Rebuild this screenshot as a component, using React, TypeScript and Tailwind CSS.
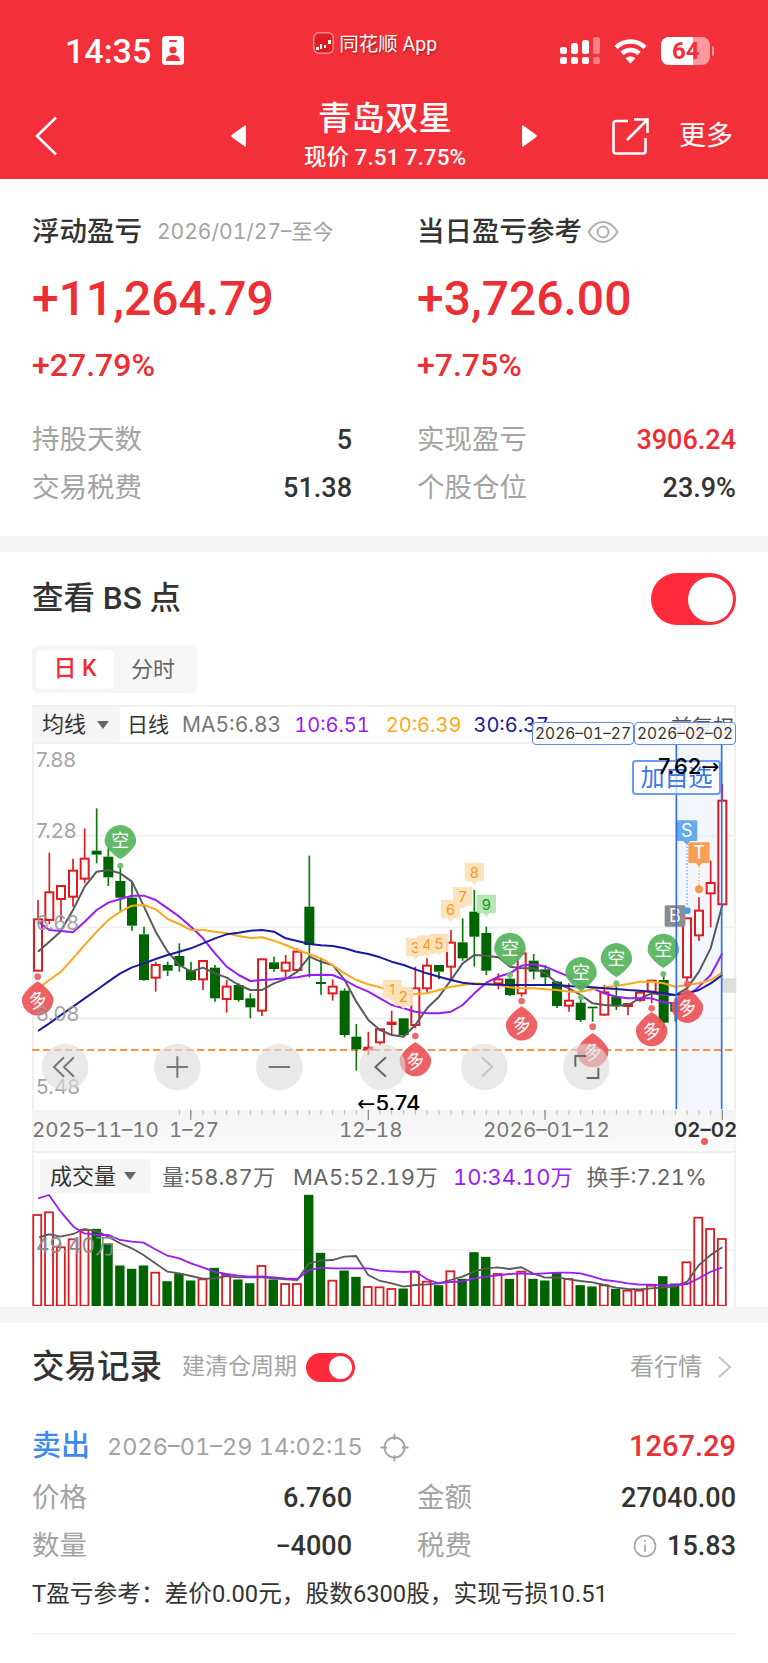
import React from "react";

const RED = "#dd1c22";
const GREEN = "#006400";

// x, high, top, bottom, low, up
type Candle = [number, number, number, number, number, number];
const candles: Candle[] = [
  [114, 600, 658, 812, 812, 1], [148, 458, 577, 660, 672, 1], [183, 558, 558, 597, 665, 1], [219, 476, 512, 590, 620, 1],
  [254, 385, 476, 536, 550, 1], [290, 325, 452, 464, 490, 0], [325, 445, 470, 532, 558, 0], [361, 490, 543, 593, 632, 0],
  [396, 545, 593, 677, 692, 0], [432, 680, 703, 840, 842, 0], [467, 785, 795, 833, 875, 1], [503, 785, 795, 812, 828, 0],
  [538, 730, 768, 798, 815, 0], [573, 785, 810, 840, 842, 0], [609, 782, 783, 838, 870, 1], [645, 795, 803, 895, 905, 0],
  [680, 840, 860, 897, 938, 1], [716, 850, 855, 900, 905, 0], [751, 880, 895, 922, 955, 0], [786, 777, 778, 932, 948, 1],
  [822, 770, 787, 807, 815, 0], [857, 765, 788, 812, 835, 1], [892, 745, 755, 810, 818, 1], [928, 467, 620, 735, 832, 0],
  [963, 775, 846, 852, 884, 0], [998, 838, 860, 880, 902, 1], [1034, 865, 872, 1005, 1012, 0], [1069, 972, 1010, 1048, 1112, 0],
  [1105, 995, 1043, 1048, 1065, 1], [1140, 985, 988, 1027, 1035, 1], [1175, 932, 968, 972, 1005, 1], [1211, 955, 955, 1005, 1010, 0],
  [1246, 800, 865, 975, 985, 1], [1281, 775, 797, 865, 878, 1], [1317, 795, 795, 815, 838, 0], [1353, 690, 728, 800, 840, 1],
  [1388, 655, 727, 775, 782, 0], [1423, 570, 635, 710, 800, 0], [1459, 680, 699, 812, 825, 0], [1495, 820, 838, 850, 868, 1],
  [1530, 835, 836, 885, 888, 0], [1565, 745, 760, 880, 890, 1], [1601, 762, 782, 815, 838, 0], [1636, 795, 808, 832, 852, 0],
  [1671, 843, 845, 918, 924, 0], [1707, 850, 902, 917, 935, 1], [1742, 885, 908, 960, 966, 0], [1778, 920, 920, 925, 965, 0],
  [1813, 855, 877, 944, 946, 1], [1849, 860, 890, 916, 930, 0], [1884, 910, 912, 918, 946, 1], [1920, 870, 878, 900, 905, 1],
  [1955, 840, 842, 875, 910, 1], [1991, 820, 840, 968, 988, 0], [2026, 895, 908, 935, 965, 0], [2061, 655, 655, 832, 850, 1],
  [2097, 592, 632, 706, 723, 1], [2132, 482, 549, 580, 682, 1], [2167, 252, 302, 613, 613, 1],
];

const ma5 = "114,755 180,697 219,630 254,560 290,515 325,510 361,520 396,545 432,620 467,695 503,755 538,795 573,815 609,803 645,820 680,833 716,855 751,870 786,870 822,850 857,837 892,815 928,770 963,785 998,795 1034,840 1069,905 1105,960 1140,990 1175,1005 1211,1010 1246,975 1281,925 1317,890 1353,840 1388,790 1423,765 1459,767 1495,772 1530,800 1565,805 1601,805 1636,820 1671,850 1707,865 1742,885 1778,910 1813,915 1849,917 1884,915 1920,895 1955,880 1991,885 2026,885 2061,865 2097,815 2132,745 2167,615";
const ma10 = "114,665 148,690 183,693 219,697 254,665 290,630 325,608 361,597 396,587 432,587 467,600 503,625 538,650 573,680 609,715 645,760 680,800 716,825 751,843 786,840 822,838 857,835 892,832 928,825 963,824 998,825 1034,840 1069,860 1105,875 1140,895 1175,915 1211,925 1246,935 1281,940 1317,940 1353,935 1388,915 1423,880 1459,848 1495,830 1530,820 1565,797 1601,793 1636,800 1671,815 1707,830 1742,850 1778,865 1813,880 1849,890 1884,895 1920,895 1955,895 1991,907 2026,910 2061,890 2097,860 2132,825 2167,760";
const ma20 = "114,865 148,840 183,815 219,775 254,735 290,695 325,660 361,635 396,617 432,615 467,628 503,657 538,672 573,690 609,690 645,695 680,700 716,708 751,714 786,712 822,722 857,735 892,750 928,762 963,775 998,795 1034,820 1069,840 1105,853 1140,862 1175,875 1211,880 1246,883 1281,880 1317,870 1353,860 1388,855 1423,850 1459,853 1495,855 1530,862 1565,865 1601,865 1636,868 1671,870 1707,875 1742,875 1778,868 1813,862 1849,858 1884,852 1920,845 1955,845 1991,850 2026,860 2061,855 2097,850 2132,840 2167,818";
const ma30 = "114,993 148,970 183,945 219,920 254,895 290,870 325,845 361,820 396,802 432,790 467,777 503,765 538,755 573,745 609,730 645,715 680,703 716,698 751,692 786,690 822,695 857,715 892,723 928,732 963,736 998,738 1034,745 1069,755 1105,762 1140,772 1175,785 1211,795 1246,808 1281,820 1317,830 1353,840 1388,848 1423,852 1459,853 1495,854 1530,855 1565,855 1601,855 1636,855 1671,855 1707,858 1742,860 1778,862 1813,865 1849,867 1884,870 1920,872 1955,875 1991,880 2026,885 2061,880 2097,870 2132,850 2167,825";

const volTops: [number, number][] = [
  [285, 1], [277, 1], [382, 1], [358, 1], [330, 1], [328, 0], [372, 0], [438, 0], [448, 0], [438, 0], [458, 1], [485, 0], [462, 0], [483, 0], [478, 1],
  [445, 0], [465, 1], [480, 0], [491, 0], [438, 1], [480, 0], [492, 1], [492, 1], [226, 0], [400, 0], [482, 1], [453, 0], [472, 0], [501, 1], [502, 1],
  [507, 1], [507, 0], [455, 1], [485, 1], [497, 0], [454, 1], [478, 0], [398, 0], [412, 0], [462, 1], [478, 0], [455, 1], [478, 0], [483, 0], [460, 0],
  [477, 1], [497, 0], [501, 0], [496, 1], [508, 0], [512, 1], [512, 1], [497, 1], [470, 0], [492, 0], [427, 1], [293, 1], [327, 1], [357, 1],
];
const volMa5 = "80,352 100,343 124,350 150,342 172,327 200,335 221,350 245,370 269,385 293,405 317,430 342,455 366,460 390,468 414,476 438,476 462,468 486,472 510,472 535,472 559,475 583,478 607,480 631,430 655,422 679,420 703,410 727,408 752,465 776,483 800,490 824,500 848,495 872,493 896,490 920,480 944,470 968,455 992,445 1016,442 1040,447 1064,442 1088,460 1113,473 1137,472 1161,478 1185,483 1210,487 1234,495 1258,503 1282,507 1306,508 1330,505 1355,502 1379,500 1403,485 1427,435 1451,405 1475,382";
const volMa10 = "78,235 100,225 124,275 150,320 172,340 200,345 221,345 245,360 269,365 293,368 317,388 342,407 366,415 390,430 414,442 438,455 462,462 486,467 510,470 535,469 559,472 583,475 607,477 631,450 655,443 679,445 703,445 727,445 752,445 776,452 800,454 824,456 848,454 872,478 896,490 920,486 944,484 968,475 992,470 1016,466 1040,462 1064,460 1088,462 1113,460 1137,458 1161,458 1185,460 1210,470 1234,480 1258,484 1282,490 1306,494 1330,494 1355,496 1379,495 1403,492 1427,475 1451,455 1475,442";

// zoom units to px inside the volume svg (top-left at 32,1193)
const vx = (x: number) => x / 2.0417 - 32;
const vy = (y: number) => 1120 + y / 3 - 1193;
const toVol = (pts: string) =>
  pts
    .split(" ")
    .map((p) => {
      const [x, y] = p.split(",").map(Number);
      return `${vx(x).toFixed(1)},${vy(y).toFixed(1)}`;
    })
    .join(" ");

const cjk = "'Noto Sans CJK SC', sans-serif";

function Kong({ x, y, dot }: { x: number; y: number; dot: number }) {
  return (
    <g opacity={0.92}>
      <circle cx={x} cy={dot} r={9} fill="#6cc070" />
      <path d={`M${x - 46} ${y + 10} A47 47 0 1 1 ${x + 46} ${y + 10} Q${x + 30} ${y + 38} ${x} ${y + 56} Q${x - 30} ${y + 38} ${x - 46} ${y + 10}Z`} fill="#55b45b" />
      <text x={x} y={y + 20} textAnchor="middle" fontSize={54} fill="#fff" fontFamily={cjk}>空</text>
    </g>
  );
}

function Duo({ x, y, dot }: { x: number; y: number; dot: number }) {
  return (
    <g opacity={0.92}>
      <circle cx={x} cy={dot} r={10} fill="#ee5f5f" />
      <path d={`M${x + 46} ${y - 10} A47 47 0 1 1 ${x - 46} ${y - 10} Q${x - 30} ${y - 38} ${x} ${y - 56} Q${x + 30} ${y - 38} ${x + 46} ${y - 10}Z`} fill="#ec5458" />
      <text x={x} y={y + 20} textAnchor="middle" fontSize={54} fill="#fff" fontFamily={cjk} transform={`rotate(-18 ${x} ${y})`}>多</text>
    </g>
  );
}

function Nine({ x, y, n, green }: { x: number; y: number; n: string; green?: boolean }) {
  return (
    <g>
      <path d={`M${x - 29} ${y - 29} h58 v50 a6 6 0 0 1 -6 6 h-14 l-9 10 l-9 -10 h-14 a6 6 0 0 1 -6 -6Z`} fill={green ? "#b3e2b0" : "#fde0b8"} opacity={0.92} />
      <text x={x} y={y + 16} textAnchor="middle" fontSize={44} fill={green ? "#0a9a12" : "#f59a23"} fontFamily="Inter, sans-serif">{n}</text>
    </g>
  );
}

function Tag({ x, y, c, t }: { x: number; y: number; c: string; t: string }) {
  return (
    <g>
      <rect x={x - 32} y={y - 31} width={64} height={62} rx={4} fill={c} />
      <path d={`M${x - 10} ${y + 31} L${x} ${y + 42} L${x + 10} ${y + 31}Z`} fill={c} />
      <text x={x} y={y + 20} textAnchor="middle" fontSize={54} fill="#fff" fontFamily="Inter, sans-serif">{t}</text>
    </g>
  );
}

function KChart() {
  return (
    <svg width={704} height={366} viewBox="96 132 2112 1098" className="-mx-[2px] block overflow-visible">
      <rect x={2029} y={132} width={136} height={1098} fill="#f3f6fd" />
      {[407, 682, 955].map((y) => (
        <line key={y} x1={96} x2={2208} y1={y} y2={y} stroke="#eeeeee" strokeWidth={5} />
      ))}
      <rect x={2167} y={835} width={42} height={43} fill="#dddddd" />
      <line x1={96} x2={2208} y1={1050} y2={1050} stroke="#ff9448" strokeWidth={6} strokeDasharray="22 11" />

      {candles.map(([x, h, t, b, l, up]) => {
        const c = up ? RED : GREEN;
        return (
          <g key={x}>
            <line x1={x} x2={x} y1={h} y2={t} stroke={up ? RED : "#0a7a0a"} strokeWidth={5} />
            <line x1={x} x2={x} y1={b} y2={l} stroke={up ? RED : "#0a7a0a"} strokeWidth={5} />
            {up ? (
              <rect x={x - 12} y={t} width={24} height={Math.max(b - t, 4)} fill="#fff" stroke={c} strokeWidth={6} />
            ) : (
              <rect x={x - 15} y={t} width={30} height={Math.max(b - t, 5)} fill={c} />
            )}
          </g>
        );
      })}

      <polyline points={ma5} fill="none" stroke="#595959" strokeWidth={6} strokeLinejoin="round" />
      <polyline points={ma10} fill="none" stroke="#9b1cf5" strokeWidth={6} strokeLinejoin="round" />
      <polyline points={ma20} fill="none" stroke="#fba81a" strokeWidth={6} strokeLinejoin="round" />
      <polyline points={ma30} fill="none" stroke="#1a1a9c" strokeWidth={6} strokeLinejoin="round" />

      <Nine x={1177} y={868} n="1" />
      <Nine x={1210} y={890} n="2" />
      <Nine x={1246} y={742} n="3" />
      <Nine x={1281} y={735} n="4" />
      <Nine x={1317} y={730} n="5" />
      <Nine x={1352} y={628} n="6" />
      <Nine x={1388} y={590} n="7" />
      <Nine x={1423} y={517} n="8" />
      <Nine x={1459} y={613} n="9" green />

      <Kong x={361} y={422} dot={497} />
      <Kong x={1530} y={745} dot={825} />
      <Kong x={1743} y={818} dot={892} />
      <Kong x={1849} y={776} dot={850} />
      <Kong x={1990} y={748} dot={822} />

      <Duo x={113} y={900} dot={830} />
      <Duo x={1246} y={1082} dot={1008} />
      <Duo x={1565} y={975} dot={903} />
      <Duo x={1778} y={1055} dot={980} />
      <Duo x={1955} y={992} dot={925} />
      <Duo x={2062} y={922} dot={852} />

      {/* BS tags */}
      <rect x={1994} y={616} width={62} height={64} rx={4} fill="#8c8c8c" />
      <text x={2025} y={667} textAnchor="middle" fontSize={54} fill="#fff" fontFamily="Inter, sans-serif">B</text>
      <line x1={2061} x2={2061} y1={430} y2={620} stroke="#66a9ee" strokeWidth={4} strokeDasharray="4 6" />
      <circle cx={2062} cy={632} r={10} fill="#4b96ee" />
      <line x1={2097} x2={2097} y1={490} y2={555} stroke="#f7a055" strokeWidth={4} strokeDasharray="4 6" />
      <circle cx={2097} cy={568} r={12} fill="#f7964a" />
      <Tag x={2060} y={392} c="#66a9ee" t="S" />
      <Tag x={2097} y={458} c="#f7a055" t="T" />

      <line x1={2029} x2={2029} y1={132} y2={1228} stroke="#2f6fee" strokeWidth={5} />
      <line x1={2165} x2={2165} y1={132} y2={1228} stroke="#2f6fee" strokeWidth={5} />

      {[
        ["7.88", 200],
        ["7.28", 415],
        ["6.68", 690],
        ["6.08", 964],
        ["5.48", 1182],
      ].map(([t, y]) => (
        <text key={t} x={108} y={y} fontSize={62} fill="#999999" fontFamily="Inter, sans-serif" fillOpacity={0.9}>{t}</text>
      ))}

      {/* floating controls */}
      {[195, 532, 838, 1147, 1453, 1759].map((x) => (
        <circle key={x} cx={x} cy={1101} r={70} fill="#dcdcdc" opacity={0.62} />
      ))}
      <path d="M192 1072 L162 1101 L192 1130 M222 1072 L192 1101 L222 1130" fill="none" stroke="#777" strokeWidth={6} />
      <path d="M500 1101 H564 M532 1069 V1133" fill="none" stroke="#777" strokeWidth={6} />
      <path d="M806 1101 H870" fill="none" stroke="#777" strokeWidth={6} />
      <path d="M1158 1072 L1126 1101 L1158 1130" fill="none" stroke="#666" strokeWidth={6} />
      <path d="M1445 1072 L1477 1101 L1445 1130" fill="none" stroke="#c4c4c4" strokeWidth={6} />
      <path d="M1726 1100 V1068 H1758 M1760 1134 H1795 V1103" fill="none" stroke="#666" strokeWidth={6} />
    </svg>
  );
}

function VolChart() {
  return (
    <svg width={704} height={113} className="-mx-[2px] block">
      <line x1={0} x2={704} y1={vy(390)} y2={vy(390)} stroke="#eeeeee" strokeWidth={1.5} />
      {volTops.map(([t, up], i) => {
        const x = vx(76 + i * 24.1);
        const y = vy(t);
        const b = vy(557);
        return up ? (
          <rect key={i} x={x - 4} y={y} width={8} height={b - y} fill="#fff" stroke={RED} strokeWidth={1.8} />
        ) : (
          <rect key={i} x={x - 4.7} y={y - 0.5} width={9.4} height={b - y + 1} fill={GREEN} />
        );
      })}
      <polyline points={toVol(volMa5)} fill="none" stroke="#595959" strokeWidth={1.8} />
      <polyline points={toVol(volMa10)} fill="none" stroke="#9b1cf5" strokeWidth={1.8} />
      <text x={4} y={60} fontSize={21} fill="#8a8a8a" fontFamily={`Inter, ${cjk}`}>49.40万</text>
    </svg>
  );
}

function Toggle({ big }: { big?: boolean }) {
  return big ? (
    <div className="flex h-[52px] w-[85px] items-center justify-end rounded-full bg-[#ff2a3c] pr-[3px]">
      <div className="size-[45px] rounded-full bg-white" />
    </div>
  ) : (
    <div className="flex h-[29px] w-[49px] items-center justify-end rounded-full bg-[#ff2a3c] pr-[3px]">
      <div className="size-[23px] rounded-full bg-white" />
    </div>
  );
}

function Row({ label, value, valueClass = "text-[#333333]", icon }: { label: string; value: string; valueClass?: string; icon?: React.ReactNode }) {
  return (
    <div className="flex h-[30px] items-center justify-between">
      <span className="text-[27.500px] text-[#a3a3a3]">{label}</span>
      <span className={`flex items-center gap-[10px] font-['Roboto','Noto_Sans_CJK_SC',sans-serif] text-[27px] font-medium ${valueClass}`}>
        {icon}
        {value}
      </span>
    </div>
  );
}

export default function App() {
  return (
    <div className="h-[1663px] w-[768px] overflow-hidden bg-white font-['Roboto','Noto_Sans_CJK_SC',sans-serif]">
      {/* header */}
      <header className="h-[179px] bg-[#f3303a] text-white">
        <div className="flex h-[87px] items-start">
          <div className="ml-[65px] mt-[31px] font-['Roboto',sans-serif] text-[34px] font-medium leading-[40px]">14:35</div>
          <svg width={22} height={29} viewBox="0 0 22 29" className="ml-[11px] mt-[36px]">
            <rect width={22} height={29} rx={3.5} fill="#fff" />
            <rect x={7} y={4} width={8} height={2} rx={1} fill="#f3303a" />
            <circle cx={11} cy={14} r={3.6} fill="#f3303a" />
            <path d="M4 25c0-4 3-6 7-6s7 2 7 6z" fill="#f3303a" />
          </svg>
          <svg width={21} height={22} viewBox="0 0 21 22" className="ml-[129px] mt-[32px]">
            <rect x={0.75} y={0.75} width={19.5} height={20.5} rx={5} fill="#e11b22" stroke="#f58a8f" strokeWidth={1.5} />
            <path d="M3 15h3v3H3zM7 12h2v5H7zM11 13h2v3h-2zM15 8h3v4h-3z" fill="#fff" />
          </svg>
          <div className="ml-[5px] mt-[32px] w-[101px] whitespace-nowrap text-[19.500px] leading-[26px] [text-shadow:1px_1px_2px_rgba(90,0,0,0.55)]">同花顺 App</div>
          <svg width={40} height={28} viewBox="0 0 40 28" className="ml-[120px] mt-[37px]" fill="#fff">
            <rect x={0} y={10} width={7} height={7} rx={2.5} />
            <rect x={11} y={6} width={7} height={11} rx={2.5} />
            <rect x={22} y={3} width={7} height={14} rx={2.5} />
            <rect x={33} y={0} width={7} height={17} rx={2.5} opacity={0.4} />
            <rect x={0} y={20} width={7} height={7} rx={2} />
            <rect x={11} y={20} width={7} height={7} rx={2} />
            <rect x={22} y={20} width={7} height={7} rx={2} />
            <rect x={33} y={20} width={7} height={7} rx={2} opacity={0.4} />
          </svg>
          <svg width={33} height={26} viewBox="0 0 33 26" className="ml-[14px] mt-[38px]" fill="none" stroke="#fff" strokeWidth={4.6}>
            <path d="M2 9.5C10 1.500 23 1.500 31 9.500" />
            <path d="M8 15.500C13 10.800 20 10.800 25 15.500" />
            <path d="M16.500 25.500L11.500 20.300C14.500 17.800 18.500 17.800 21.500 20.300Z" fill="#fff" stroke="none" />
          </svg>
          <div className="relative ml-[14px] mt-[37px] flex h-[28px] w-[49px] items-center overflow-hidden rounded-[8px] bg-white/50">
            <div className="h-full w-[32px] bg-white" />
            <span className="absolute inset-0 text-center font-['Roboto',sans-serif] text-[24px] font-bold leading-[28px] text-[#f3303a]">64</span>
          </div>
          <div className="ml-[2px] mt-[46px] h-[10px] w-[2px] rounded-r bg-white/50" />
        </div>
        <div className="flex h-[92px] items-start">
          <svg width={22} height={40} viewBox="0 0 22 40" className="ml-[35px] mt-[29px]" fill="none" stroke="#fff" strokeWidth={2.6}>
            <path d="M21 1.500L2 20L21 38.500" />
          </svg>
          <svg width={16} height={22} viewBox="0 0 16 22" className="ml-[174px] mt-[38px]" fill="#fff">
            <path d="M15 1.500V20.500C15 21.500 14 22 13 21L1 12.200C0 11.500 0 10.500 1 9.800L13 1C14 0 15 .5 15 1.500Z" />
          </svg>
          <div className="ml-[57px] flex w-[162px] flex-col items-center">
            <div className="mt-[12px] whitespace-nowrap text-[33.500px] font-medium leading-[40px]">青岛双星</div>
            <div className="mt-[4px] whitespace-nowrap text-[22.500px] font-medium leading-[28px]">现价 7.51 7.75%</div>
          </div>
          <svg width={16} height={22} viewBox="0 0 16 22" className="ml-[55px] mt-[38px]" fill="#fff">
            <path d="M1 1.500V20.500C1 21.500 2 22 3 21L15 12.200C16 11.500 16 10.500 15 9.800L3 1C2 0 1 .5 1 1.500Z" />
          </svg>
          <svg width={37} height={37} viewBox="0 0 37 37" className="ml-[75px] mt-[31px]" fill="none" stroke="#fff" strokeWidth={2.6}>
            <path d="M16 3H4C2.500 3 1.500 4 1.500 5.500V33C1.500 34.500 2.500 35.500 4 35.500H31C32.500 35.500 33.500 34.500 33.500 33V20" />
            <path d="M15 22L35 2M22 1.500H35.500V15" />
          </svg>
          <div className="ml-[30px] mt-[31px] whitespace-nowrap text-[27px] leading-[36px]">更多</div>
        </div>
      </header>

      {/* summary */}
      <section className="grid grid-cols-[320px_319px] gap-x-[65px] px-[32px] pb-[33px] pt-[38px]">
        <div>
          <div className="flex h-[30px] items-center whitespace-nowrap">
            <span className="text-[27.500px] font-medium text-[#333333]">浮动盈亏</span>
            <span className="ml-[15px] font-['Inter','Noto_Sans_CJK_SC',sans-serif] text-[21px] tabular-nums text-[#a3a3a3]">2026/01/27–至今</span>
          </div>
          <div className="mt-[24px] h-[56px] text-[48px] font-medium leading-[56px] text-[#ec2f35]">+11,264.79</div>
          <div className="mt-[20px] h-[36px] text-[32px] font-medium leading-[36px] text-[#ec2f35]">+27.79%</div>
          <div className="mt-[42px]"><Row label="持股天数" value="5" /></div>
          <div className="mt-[18px]"><Row label="交易税费" value="51.38" /></div>
        </div>
        <div>
          <div className="flex h-[30px] items-center whitespace-nowrap">
            <span className="text-[27.500px] font-medium text-[#333333]">当日盈亏参考</span>
            <svg width={32} height={24} viewBox="0 0 32 24" className="ml-[5px]" fill="none" stroke="#b0b0b0" strokeWidth={2}>
              <path d="M1.500 12C6 4.500 11 2 16 2s10 2.500 14.500 10C26 19.500 21 22 16 22S6 19.500 1.500 12Z" />
              <circle cx={16} cy={12} r={5.500} />
            </svg>
          </div>
          <div className="mt-[24px] h-[56px] text-[48px] font-medium leading-[56px] text-[#ec2f35]">+3,726.00</div>
          <div className="mt-[20px] h-[36px] text-[32px] font-medium leading-[36px] text-[#ec2f35]">+7.75%</div>
          <div className="mt-[42px]"><Row label="实现盈亏" value="3906.24" valueClass="text-[#ec2f35]" /></div>
          <div className="mt-[18px]"><Row label="个股仓位" value="23.9%" /></div>
        </div>
      </section>

      <div className="h-[16px] bg-[#f5f5f5]" />

      {/* BS chart */}
      <section className="px-[32px]">
        <div className="mt-[21px] flex h-[52px] items-center justify-between">
          <span className="text-[31.500px] font-medium text-[#333333]">查看 BS 点</span>
          <Toggle big />
        </div>
        <div className="mt-[21px] flex h-[47px] w-[165px] items-center rounded-[6px] bg-[#f6f6f6] pl-[4px]">
          <div className="flex h-[39px] w-[78px] items-center justify-center gap-[6px] rounded-[5px] bg-white text-[23px] font-medium text-[#ec2f35]">日 K</div>
          <div className="ml-[17px] text-[22px] text-[#666666]">分时</div>
        </div>

        <div className="relative mt-[12px] border-x-2 border-t-2 border-[#f0f0f0]">
          <div className="-mx-[2px] flex h-[37px] items-center overflow-hidden whitespace-nowrap border-b-2 border-[#f0f0f0] font-['Inter','Noto_Sans_CJK_SC',sans-serif] text-[20px] tabular-nums">
            <div className="flex h-[35px] w-[88px] items-center rounded-[3px] bg-[#f5f5f5] pl-[10px] text-[22px] text-[#333333]">
              均线
              <span className="ml-[11px] h-0 w-0 border-x-[6px] border-t-[8px] border-x-transparent border-t-[#666666]" />
            </div>
            <span className="ml-[7px] text-[21px] text-[#333333]">日线</span>
            <span className="ml-[13px] text-[21px] text-[#777777]">MA5:6.83</span>
            <span className="ml-[13px] text-[#9b1cf5]">10:6.51</span>
            <span className="ml-[16px] text-[#fba81a]">20:6.39</span>
            <span className="ml-[12px] text-[#1a1a9c]">30:6.37</span>
            <span className="absolute right-0 top-[4px] text-[21px] text-[#555555]">前复权</span>
          </div>
          <KChart />
          {/* date labels, price callouts */}
          <div className="absolute left-[498px] top-[15px] flex h-[23px] w-[102px] items-center justify-center rounded-[4px] border border-[#5a8cf0] bg-white/85 font-['Inter',sans-serif] text-[15.500px] tabular-nums text-[#333333]">2026–01–27</div>
          <div className="absolute left-[600px] top-[15px] flex h-[23px] w-[102px] items-center justify-center rounded-[4px] border border-[#5a8cf0] bg-white/85 font-['Inter',sans-serif] text-[15.500px] tabular-nums text-[#333333]">2026–02–02</div>
          <div className="absolute left-[598px] top-[53px] flex h-[35px] w-[89px] items-center justify-center rounded-[4px] border-2 border-[#6a9cf5] bg-white/70 text-[24px] leading-none text-[#3a76ee]">加自选</div>
          <div className="absolute left-[624px] top-[43px] whitespace-nowrap font-['Inter',sans-serif] text-[22px] font-medium text-black">7.62<span className="font-['DejaVu_Sans',sans-serif] font-normal">→</span></div>
          <div className="absolute left-[323px] top-[380px] whitespace-nowrap font-['Inter',sans-serif] text-[22px] font-medium text-black"><span className="font-['DejaVu_Sans',sans-serif] font-normal">←</span>5.74</div>
        </div>

        {/* axis */}
        <div className="relative h-[41px] border-x-2 border-[#f4f4f4] bg-gradient-to-b from-[#f4f4f4] to-[#fbfbfb] font-['Inter',sans-serif] text-[20.500px] tabular-nums text-[#777777]">
          <svg width={700} height={10} className="absolute left-0 top-0">
            {candles.slice(12).map(([x]) => (
              <line key={x} x1={x / 3 - 34} x2={x / 3 - 34} y1={0} y2={5} stroke="#bbbbbb" strokeWidth={1} />
            ))}
            {[572, 1105, 1635, 2167].map((x) => (
              <line key={x} x1={x / 3 - 34} x2={x / 3 - 34} y1={0} y2={10} stroke="#888888" strokeWidth={1.2} />
            ))}
          </svg>
          <div className="-mx-[2px] flex h-[36px] items-end whitespace-nowrap">
            <span className="w-[126px] text-center">2025–11–10</span>
            <span className="ml-[8px] w-[56px] text-center">1–27</span>
            <span className="ml-[117px] w-[59px] text-center">12–18</span>
            <span className="ml-[85px] w-[124px] text-center">2026–01–12</span>
            <span className="ml-[67px] w-[62px] text-center font-semibold text-[#333333]">02–02</span>
          </div>
          <div className="absolute left-[667px] top-[28px] size-[7px] rounded-full bg-[#f25a5a]" />
        </div>

        {/* volume */}
        <div className="h-[156px] border-x-2 border-t-2 border-[#f0f0f0]">
          <div className="-mx-[2px] flex h-[40px] items-start whitespace-nowrap font-['Inter','Noto_Sans_CJK_SC',sans-serif] text-[22px] tabular-nums text-[#666666]">
            <div className="ml-[8px] mt-[6px] flex h-[34px] w-[111px] items-center rounded-[3px] bg-[#f5f5f5] pl-[10px] text-[22px] text-[#333333]">
              成交量
              <span className="ml-[8px] h-0 w-0 border-x-[6px] border-t-[8px] border-x-transparent border-t-[#666666]" />
            </div>
            <span className="ml-[11px] mt-[8px]">量:58.87万</span>
            <span className="ml-[18px] mt-[8px] tracking-[0.5px]">MA5:52.19万</span>
            <span className="ml-[15px] mt-[8px] text-[#9b1cf5]">10:34.10万</span>
            <span className="ml-[14px] mt-[8px]">换手:7.21%</span>
          </div>
          <VolChart />
        </div>
      </section>

      <div className="h-[16px] bg-[#f5f5f5]" />

      {/* trade records */}
      <section className="px-[32px] pt-[27px]">
        <div className="flex h-[34px] items-center whitespace-nowrap">
          <span className="text-[32.500px] font-medium text-[#333333]">交易记录</span>
          <span className="ml-[20px] text-[23px] text-[#a3a3a3]">建清仓周期</span>
          <div className="ml-[9px]"><Toggle /></div>
          <span className="ml-auto text-[24px] text-[#a3a3a3]">看行情</span>
          <svg width={15} height={24} viewBox="0 0 15 24" className="ml-[15px] mr-[4px]" fill="none" stroke="#c4c4c4" strokeWidth={2}>
            <path d="M2 2L13 12L2 22" />
          </svg>
        </div>
        <div className="mt-[47px] flex h-[32px] items-center whitespace-nowrap">
          <span className="text-[29px] font-medium text-[#3d8bf0]">卖出</span>
          <span className="ml-[17px] font-['Inter',sans-serif] text-[23.500px] tabular-nums text-[#a3a3a3]">2026–01–29 14:02:15</span>
          <svg width={29} height={29} viewBox="0 0 29 29" className="ml-[17px]" fill="none" stroke="#a3a3a3" strokeWidth={1.8}>
            <circle cx={14.500} cy={14.500} r={10} />
            <path d="M14.500 0.500V7M14.500 22V28.500M0.500 14.500H7M22 14.500H28.500" />
          </svg>
          <span className="ml-auto text-[29px] font-medium text-[#ec2f35]">1267.29</span>
        </div>
        <div className="mt-[20px] grid grid-cols-[320px_319px] gap-x-[65px]">
          <Row label="价格" value="6.760" />
          <Row label="金额" value="27040.00" />
        </div>
        <div className="mt-[18px] grid grid-cols-[320px_319px] gap-x-[65px]">
          <Row label="数量" value="−4000" />
          <Row
            label="税费"
            value="15.83"
            icon={
              <svg width={24} height={24} viewBox="0 0 24 24" fill="none" stroke="#a3a3a3" strokeWidth={1.6}>
                <circle cx={12} cy={12} r={10.500} />
                <path d="M12 10.500V18M12 6V8" />
              </svg>
            }
          />
        </div>
        <div className="mt-[19px] h-[28px] whitespace-nowrap text-[23.700px] leading-[28px] text-[#333333]">T盈亏参考：差价0.00元，股数6300股，实现亏损10.51</div>
        <div className="mt-[25px] h-[2px] bg-[#f3f3f3]" />
      </section>
    </div>
  );
}
